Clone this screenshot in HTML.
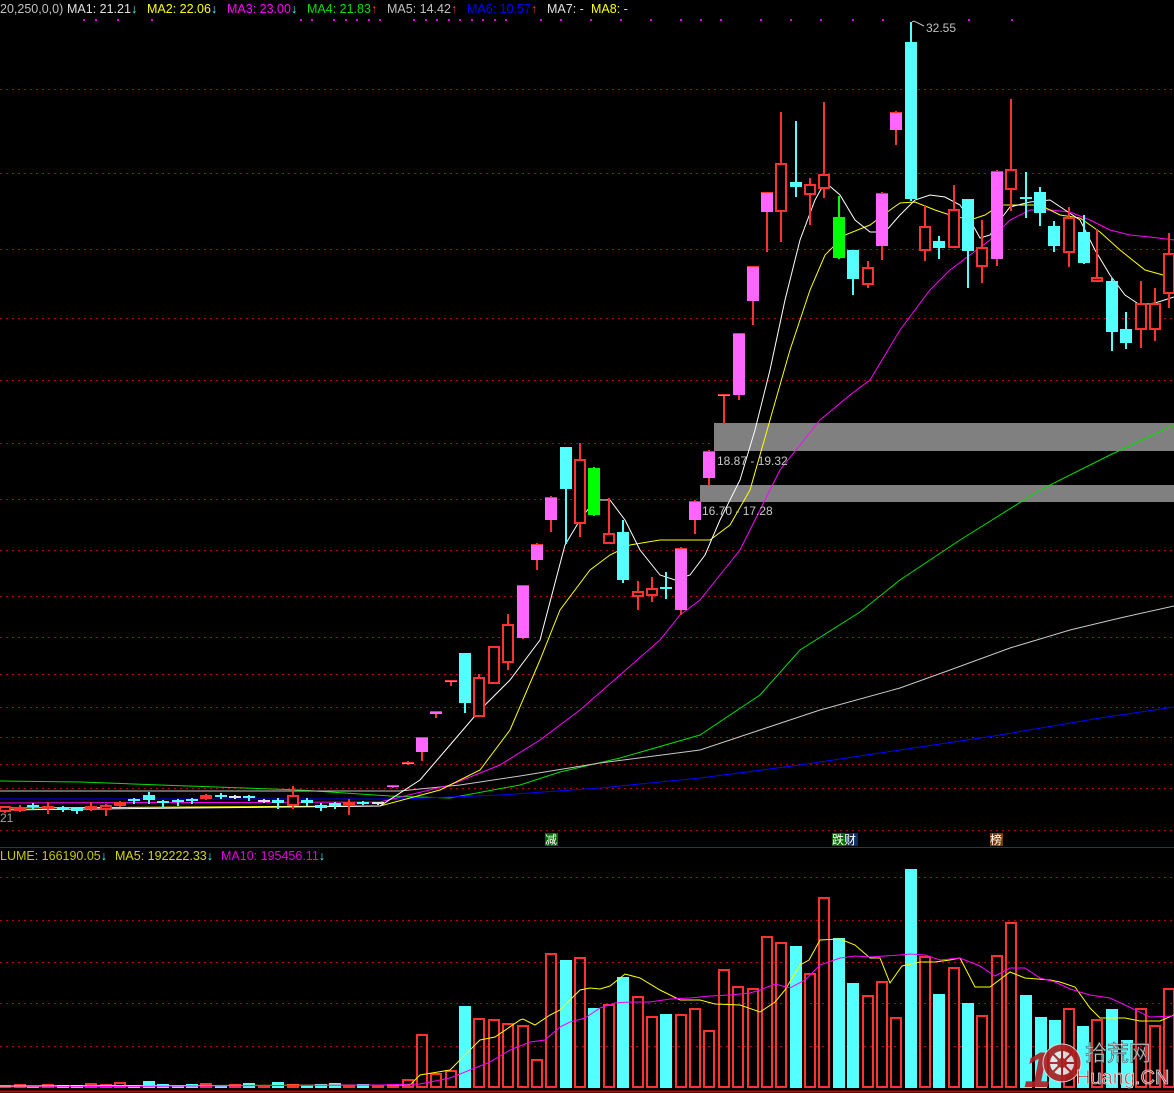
<!DOCTYPE html>
<html><head><meta charset="utf-8"><style>
html,body{margin:0;padding:0;background:#000;width:1174px;height:1093px;overflow:hidden}
svg{position:absolute;left:0;top:0}
.t{font-family:"Liberation Sans","Noto Sans CJK SC",sans-serif;font-size:12px}
.h{font-size:12.5px}
</style></head><body>
<svg id="s" width="1174" height="1093" xmlns="http://www.w3.org/2000/svg">
<g id="grid" stroke="#b00000" stroke-width="1" stroke-dasharray="2,4"></g>
<line x1="0" y1="847.5" x2="1174" y2="847.5" stroke="#b00000"/>
<line x1="0" y1="1091.5" x2="1174" y2="1091.5" stroke="#d00000" stroke-width="2"/>
<rect x="714" y="423" width="460" height="28" fill="#808080"/>
<rect x="700" y="485" width="474" height="17" fill="#808080"/>
<g id="ma" fill="none" stroke-width="1"></g>
<g id="cd"></g>
<g id="vol"></g>
<g id="vma" fill="none"></g>
<g id="dots" fill="#e000e0"></g>
<text class="t h" x="0" y="13" fill="#c0c0c0">20,250,0,0)</text>
<text class="t h" x="67" y="13" fill="#e0e0e0">MA1: 21.21<tspan fill="#54ffff">↓</tspan></text>
<text class="t h" x="147" y="13" fill="#ffff00">MA2: 22.06<tspan fill="#54ffff">↓</tspan></text>
<text class="t h" x="227" y="13" fill="#ff00ff">MA3: 23.00<tspan fill="#54ffff">↓</tspan></text>
<text class="t h" x="307" y="13" fill="#00e000">MA4: 21.83<tspan fill="#ff3232">↑</tspan></text>
<text class="t h" x="387" y="13" fill="#c0c0c0">MA5: 14.42<tspan fill="#ff3232">↑</tspan></text>
<text class="t h" x="467" y="13" fill="#0000ff">MA6: 10.57<tspan fill="#ff3232">↑</tspan></text>
<text class="t h" x="547" y="13" fill="#e0e0e0">MA7: -</text>
<text class="t h" x="591" y="13" fill="#ffff00">MA8: -</text>
<text class="t" x="0" y="822" fill="#a0a0a0">21</text>
<text class="t" x="926" y="32" fill="#c0c0c0">32.55</text>
<polyline points="912,22 914,21 924,26" stroke="#c0c0c0" fill="none"/>
<text class="t" x="717" y="465" fill="#c8c8c8">18.87 - 19.32</text>
<text class="t" x="702" y="515" fill="#c8c8c8">16.70 - 17.28</text>
<rect x="545" y="833" width="13" height="13" fill="#006a00"/>
<text class="t" x="545" y="844" fill="#fff">减</text>
<rect x="832" y="833" width="13" height="13" fill="#006a00"/>
<rect x="845" y="833" width="13" height="13" fill="#0a3060"/>
<text class="t" x="832" y="844" fill="#fff">跌财</text>
<rect x="990" y="833" width="13" height="13" fill="#7a3a00"/>
<text class="t" x="990" y="844" fill="#fff">榜</text>
<text class="t h" x="0" y="860" fill="#c8c800">LUME: 166190.05<tspan fill="#54ffff">↓</tspan><tspan dx="8" fill="#d8d800">MA5: 192222.33</tspan><tspan fill="#54ffff">↓</tspan><tspan dx="8" fill="#e000e0">MA10: 195456.11</tspan><tspan fill="#54ffff">↓</tspan></text>
<g opacity="0.92">
<text x="1024" y="1087" font-family="Liberation Sans,sans-serif" font-weight="bold" font-size="50" fill="#b02020" font-style="italic">1</text>
<circle cx="1062" cy="1063" r="19" fill="#b02020" stroke="#e0e0e0" stroke-width="1"/>
<circle cx="1062" cy="1063" r="12" fill="#e8e8e8"/>
<circle cx="1062" cy="1063" r="5" fill="#b02020"/>
<g stroke="#b02020" stroke-width="2"><line x1="1062" y1="1051" x2="1062" y2="1075"/><line x1="1050" y1="1063" x2="1074" y2="1063"/><line x1="1053" y1="1054" x2="1071" y2="1072"/><line x1="1071" y1="1054" x2="1053" y2="1072"/></g>
<text x="1085" y="1061" font-family="Noto Sans CJK SC,sans-serif" font-size="22" fill="#d8d8d8" stroke="#404040" stroke-width="0.6">拾荒网</text>
<text x="1076" y="1084" font-family="Liberation Sans,sans-serif" font-size="20" fill="#b02020" stroke="#e8e8e8" stroke-width="0.8">Huang.CN</text>
</g>
</svg>
<script>
var NS="http://www.w3.org/2000/svg";
function el(p,n,a){var e=document.createElementNS(NS,n);for(var k in a)e.setAttribute(k,a[k]);document.getElementById(p).appendChild(e);return e;}
[89,173,249,318,380,443,499,550,596,637,674,707,737,764,788,830,877,920,962,1003,1046].forEach(function(y){el('grid','line',{x1:0,y1:y+.5,x2:1174,y2:y+.5});});
var dx=[83,95,117,151,300,311,333,345,356,368,379,413,425,436,448,459,471,482,494,505,540,560,590,620,650,680,700,720,760,790,820,852,882,968,1011];
dx.forEach(function(x){el('dots','rect',{x:x,y:19,width:2,height:2});});
function pl(c,pts,g,w){el(g||'ma','polyline',{points:pts,stroke:c,'stroke-width':w||1,fill:'none'});}
pl('#00e000','0,781 80,782 160,785 300,790 390,796 450,798 520,785 560,772 620,758 700,735 760,695 800,650 860,612 900,580 960,540 1040,490 1110,455 1174,425');
pl('#c8c8c8','0,791 400,791 460,785 520,776 600,763 700,750 760,730 820,710 900,688 950,670 1010,648 1070,630 1120,618 1174,606');
pl('#0000ff','0,799 400,799 500,795 600,788 700,778 800,765 900,750 1000,735 1100,718 1174,707');
pl('#ff00ff','0,803 380,802 450,785 500,765 540,740 580,710 620,675 660,640 680,615 700,600 720,575 740,550 760,510 780,470 800,445 820,420 850,395 870,380 900,330 930,290 950,270 970,255 990,240 1010,220 1030,210 1050,210 1070,212 1090,220 1110,230 1130,235 1150,237 1174,240');
pl('#ffff00','0,808 380,806 440,790 480,770 510,730 540,660 560,610 590,570 610,555 630,545 660,540 690,540 710,540 730,525 750,490 770,420 790,350 810,290 825,255 845,235 870,225 890,210 900,203 915,202 935,210 950,215 970,220 985,215 1000,205 1020,205 1040,205 1060,215 1080,218 1100,232 1120,250 1145,270 1174,278');
pl('#ffffff','0,810 380,806 420,780 450,745 480,710 510,680 540,640 565,545 580,520 595,500 610,500 625,520 640,550 660,575 675,580 690,575 705,555 720,520 740,480 755,430 770,370 785,300 800,240 815,200 825,182 840,195 855,220 870,232 885,232 900,215 915,200 930,195 945,197 960,205 970,220 980,238 990,235 1000,220 1010,207 1030,202 1050,200 1065,210 1080,220 1095,250 1110,275 1125,295 1140,305 1155,303 1174,297');
var C={p:'#ff66ff',c:'#54ffff',g:'#00ff00',r:'#ff3232',w:'#e0e0e0'};
var cd=[[5,806,806,811,812,'r'],[20,805,807,810,811,'r'],[33,803,805,807,809,'c'],[48,802,806,808,813,'r'],[63,806,807,809,811,'c'],[77,807,808,811,813,'c'],[91,802,806,808,810,'r'],[106,804,805,809,815,'r'],[120,801,802,805,806,'r'],[134,798,799,801,803,'c'],[149,792,795,800,803,'c'],[163,800,801,803,806,'c'],[178,799,800,802,805,'c'],[192,798,799,801,803,'c'],[206,794,795,798,799,'r'],[221,793,795,796,798,'c'],[235,795,796,797,798,'w'],[249,795,796,798,800,'c'],[264,799,800,801,802,'w'],[278,798,800,803,808,'c'],[293,786,795,805,808,'r'],[307,798,800,803,805,'c'],[321,803,805,808,810,'c'],[335,802,803,806,808,'c'],[349,799,802,804,814,'r'],[363,801,802,803,804,'c'],[378,802,802,804,804,'w'],
[393,785,785,787,787,'p'],[408,761,762,763,764,'p'],[422,737,737,752,760,'p'],[436,711,711,714,717,'p'],[451,680,680,682,685,'p'],[465,653,653,703,712,'c'],[479,674,677,716,716,'r'],[494,646,646,683,683,'r'],[508,614,624,662,669,'r'],[523,585,585,638,638,'p'],[537,543,544,560,569,'p'],[551,496,497,520,531,'p'],[566,447,447,489,543,'c'],[580,443,459,523,536,'r'],[594,467,468,515,515,'g'],[609,498,533,543,543,'r'],[623,520,532,580,582,'c'],[638,581,591,596,609,'r'],[652,577,588,595,601,'r'],[666,572,587,589,598,'c'],[681,547,548,610,614,'p'],[695,500,501,520,533,'p'],[709,450,451,478,485,'p'],[724,394,394,396,423,'p'],[739,333,333,395,399,'p'],[753,266,266,301,324,'p'],[767,192,192,212,251,'p'],[781,112,163,211,241,'r'],[796,121,182,187,196,'c'],[810,178,184,194,224,'r'],[824,102,174,188,197,'r'],[839,196,217,258,258,'g'],[853,250,250,279,294,'c'],[868,261,267,284,287,'r'],[882,192,193,246,259,'p'],[896,111,112,130,144,'p'],[911,22,42,199,200,'c'],[925,205,226,250,260,'r'],[939,236,241,248,258,'c'],[954,185,209,247,247,'r'],[968,199,199,251,287,'c'],[982,220,247,266,282,'r'],[997,170,171,259,265,'p'],[1011,99,169,189,210,'r'],[1026,172,197,199,217,'c'],[1040,187,192,213,225,'c'],[1054,221,226,246,251,'c'],[1069,207,217,252,266,'r'],[1084,215,232,263,263,'c'],[1097,229,277,281,281,'r'],[1112,278,281,332,350,'c'],[1126,312,329,343,348,'c'],[1141,281,303,329,347,'r'],[1155,288,303,329,340,'r'],[1169,233,253,293,307,'r']];
cd.forEach(function(d){var x=d[0],t=d[5],col=C[t];var wc=(t=='p'||t=='r')?'#ff3232':col;
el('cd','line',{x1:x,y1:d[1],x2:x,y2:d[4]+1,stroke:wc,'stroke-width':2});
var h=Math.max(d[3]-d[2],2);
if(t=='r'){el('cd','rect',{x:x-5,y:d[2]+1,width:10,height:Math.max(h-1,1),fill:'#000',stroke:col,'stroke-width':2});}
else{el('cd','rect',{x:x-6,y:d[2],width:12,height:h,fill:col});if(t=='p')el('cd','rect',{x:x-6,y:d[2],width:12,height:1,fill:'#ff3232'});}
});
var vb=[];var lt=[1085,1084,1086,1084,1085,1085,1083,1084,1082,1085,1081,1084,1085,1084,1083,1085,1084,1083,1085,1082,1084,1085,1084,1083,1085,1084,1085];
for(var i=0;i<27;i++){vb.push([cd[i][0],lt[i],cd[i][5]=='c'?'c':'r']);}
vb=vb.concat([[393,1084,'r'],[408,1079,'r'],[422,1034,'r'],[436,1073,'r'],[451,1070,'r'],[465,1006,'c'],[479,1018,'r'],[494,1019,'r'],[508,1023,'r'],[523,1025,'r'],[537,1059,'r'],[551,953,'r'],[566,960,'c'],[580,957,'r'],[594,1008,'c'],[609,1004,'r'],[623,977,'c'],[638,996,'r'],[652,1016,'r'],[666,1014,'c'],[681,1014,'r'],[695,1008,'r'],[709,1030,'r'],[724,969,'r'],[738,986,'r'],[753,988,'r'],[767,936,'r'],[781,942,'r'],[796,946,'c'],[810,973,'r'],[824,897,'r'],[839,938,'c'],[853,983,'c'],[868,995,'r'],[882,981,'r'],[896,1017,'r'],[911,869,'c'],[925,956,'r'],[939,994,'c'],[954,967,'r'],[968,1003,'c'],[982,1015,'r'],[997,955,'r'],[1011,922,'r'],[1026,995,'c'],[1041,1017,'c'],[1055,1020,'c'],[1069,1008,'r'],[1083,1026,'c'],[1097,1019,'r'],[1112,1009,'c'],[1127,1040,'c'],[1141,1008,'r'],[1155,1025,'r'],[1169,988,'r']]);
vb.forEach(function(v){var x=v[0],y=v[1];if(v[2]=='c')el('vol','rect',{x:x-6,y:y,width:12,height:1088-y,fill:'#54ffff'});else el('vol','rect',{x:x-5,y:y+1,width:10,height:1086-y,fill:'none',stroke:'#ff3232','stroke-width':2});});
pl('#ffff00','0,1086 380,1085 410,1085 420,1075 450,1070 470,1050 480,1040 495,1037 520,1020 523,1019 535,1025 550,1015 560,1010 580,990 590,988 600,989 610,986 625,974 640,978 660,990 680,1000 700,1000 715,1004 740,1005 760,1012 775,1002 785,990 800,965 809,960 820,940 840,939 855,945 870,958 880,958 890,983 902,966 920,962 935,962 950,960 960,958 975,987 990,987 1010,972 1025,978 1050,980 1060,982 1075,987 1090,1008 1100,1018 1110,1018 1125,1018 1140,1021 1160,1021 1174,1015','vma');
pl('#ff00ff','0,1087 380,1085 420,1084 450,1078 470,1070 490,1062 510,1050 530,1042 545,1040 560,1027 570,1022 585,1018 600,1008 615,1003 630,1002 650,1002 670,999 690,998 710,996 730,995 750,993 760,990 775,984 790,988 805,980 820,965 840,958 855,956 870,957 885,956 900,955 910,954 925,955 940,960 960,958 980,966 995,976 1010,968 1025,968 1040,978 1055,982 1070,989 1090,995 1110,998 1125,1005 1150,1017 1174,1016','vma');
</script>
</body></html>
